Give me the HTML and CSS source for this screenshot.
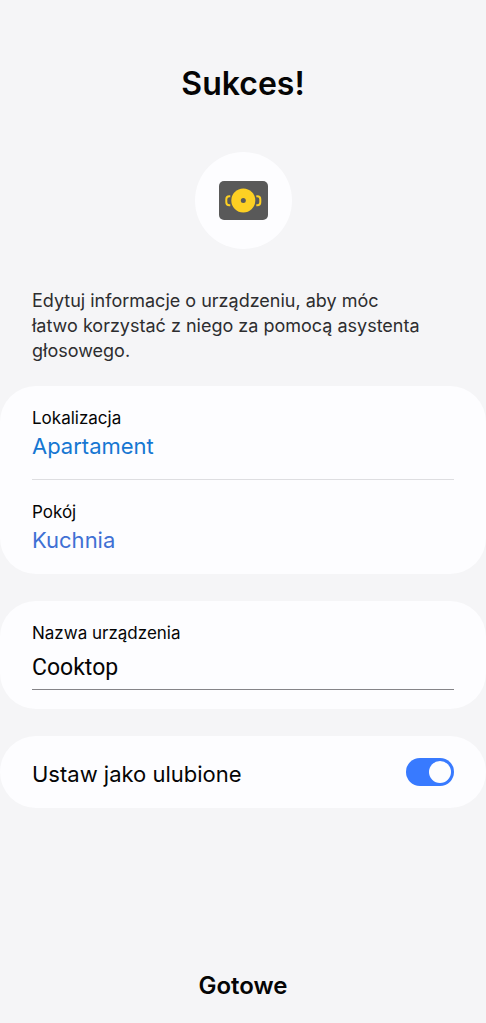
FILE: index.html
```html
<!DOCTYPE html>
<html lang="pl">
<head>
<meta charset="utf-8">
<meta name="viewport" content="width=device-width, initial-scale=1">
<title>Sukces!</title>
<link rel="stylesheet" href="styles.css">
</head>
<body>
<main class="screen">
  <h1 class="title">Sukces!</h1>
  <div class="device">
    <svg class="device-icon" viewBox="0 0 49 39" aria-hidden="true">
      <rect width="49" height="39" rx="5" fill="#595959"/>
      <g fill="none" stroke="#fdd023" stroke-width="2">
        <path d="M11.300 15.200h-1q-3 0-3 3v3q0 3 3 3h1"/>
        <path d="M37.300 15.200h1q3 0 3 3v3q0 3-3 3h-1"/>
      </g>
      <circle cx="24.300" cy="19.500" r="12" fill="#fdd023"/>
      <circle cx="24.300" cy="19.500" r="2.500" fill="#595959"/>
    </svg>
  </div>
  <p class="intro">Edytuj informacje o urządzeniu, aby móc łatwo korzystać z niego za pomocą asystenta głosowego.</p>
  <section class="card">
    <button class="row" type="button">
      <span class="label">Lokalizacja</span>
      <span class="value value-location">Apartament</span>
    </button>
    <hr class="divider">
    <button class="row" type="button">
      <span class="label">Pokój</span>
      <span class="value value-room">Kuchnia</span>
    </button>
  </section>
  <section class="card name-card">
    <label class="label" for="device-name">Nazwa urządzenia</label>
    <input class="name-input" id="device-name" type="text" value="Cooktop">
  </section>
  <section class="card favorite-card">
    <label class="favorite-label" for="favorite">Ustaw jako ulubione</label>
    <input class="switch" id="favorite" type="checkbox" role="switch" checked>
  </section>
  <footer class="footer">
    <button class="done" type="button">Gotowe</button>
  </footer>
</main>
</body>
</html>
```
FILE: styles.css
```css
* {
  box-sizing: border-box;
}

body {
  margin: 0;
  background: #f5f5f7;
  color: #050505;
  font-family: Inter, "Noto Sans", sans-serif;
}

button,
input {
  margin: 0;
  font-family: inherit;
  color: inherit;
}

.screen {
  display: flex;
  flex-direction: column;
  min-height: 100vh;
  padding-top: 60px;
}

.title {
  margin: 0;
  text-align: center;
  font-size: 32px;
  line-height: 48px;
  font-weight: 600;
}

.device {
  display: flex;
  align-items: center;
  justify-content: center;
  align-self: center;
  width: 97px;
  height: 97px;
  margin-top: 44px;
  border-radius: 50%;
  background: #fdfdff;
}

.device-icon {
  width: 49px;
  height: 39px;
}

.intro {
  margin: 39px 0 23px;
  padding: 0 60px 0 32px;
  color: #2d2d2f;
  font-size: 18px;
  line-height: 25px;
}

.card {
  margin-bottom: 27px;
  border-radius: 36px;
  background: #fdfdff;
}

.row {
  display: flex;
  flex-direction: column;
  width: 100%;
  padding: 20px 32px 18px;
  border: 0;
  background: none;
  text-align: left;
}

.label {
  display: block;
  font-size: 17px;
  line-height: 24px;
}

.value {
  font-size: 22px;
  line-height: 32px;
}

.value-location {
  color: #1677d2;
}

.value-room {
  color: #3f70d4;
}

.divider {
  height: 1px;
  margin: -1px 32px 0;
  border: 0;
  background: #dedee1;
}

.name-card {
  padding: 20px 32px 19px;
}

.name-input {
  display: block;
  width: 100%;
  height: 45px;
  padding: 0;
  border: 0;
  border-bottom: 1px solid #858488;
  border-radius: 0;
  outline: 0;
  background: none;
  font-family: Roboto, sans-serif;
  font-size: 23px;
}

.favorite-card {
  display: flex;
  align-items: center;
  justify-content: space-between;
  padding: 18px 32px;
}

.favorite-label {
  padding-top: 4px;
  font-size: 22px;
  line-height: 32px;
}

.switch {
  display: flex;
  align-items: center;
  justify-content: flex-start;
  width: 48px;
  height: 28px;
  padding: 0 3px;
  border-radius: 14px;
  background: #b4b4b8;
  appearance: none;
}

.switch::before {
  width: 22px;
  height: 22px;
  border-radius: 50%;
  background: #fdfdff;
  content: "";
}

.switch:checked {
  justify-content: flex-end;
  background: #387aff;
}

.footer {
  display: flex;
  justify-content: center;
  margin-top: auto;
  padding-bottom: 20px;
}

.done {
  padding: 0 20px;
  border: 0;
  background: none;
  font-size: 24px;
  line-height: 34px;
  font-weight: 600;
}
```
